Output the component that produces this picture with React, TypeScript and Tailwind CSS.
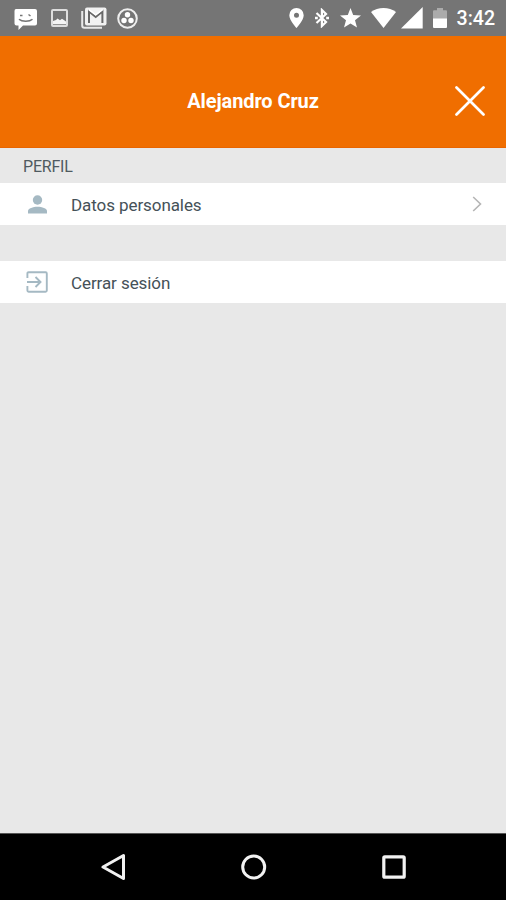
import React from 'react';

function StatusBar() {
    return (
        <div className="flex h-9 items-start bg-[#757575] text-white">
            {/* Notifications */}
            <svg className="ml-[14px] mt-[9px]" width="23" height="21" viewBox="0 0 23 21" fill="none">
                <path d="M2 0H21Q23 0 23 2V14.5Q23 16.5 21 16.5H9L4.5 21V16.5H2.5Q.5 16.5 .5 14.5V2Q.5 0 2 0Z" fill="currentColor" />
                <path d="M6 6.5H8.5M14.5 5.5L16.5 7M5 10.3C8 13 15.5 13 18.5 10.3" stroke="#757575" strokeWidth="1.5" />
            </svg>
            <svg className="ml-[14px] mt-[9px]" width="17" height="18" viewBox="0 0 17 18" fill="none">
                <rect x="1" y="1" width="15" height="16" rx="1" stroke="#dedede" strokeWidth="2" />
                <path d="M2 15.3V12L5 11L6.5 9.5L9 11.3L11 9.8L15 12.5V15.3Z" fill="#f5f5f5" />
            </svg>
            <svg className="ml-[13px] mt-[7px]" width="26" height="22" viewBox="0 0 26 22" fill="none">
                <path d="M1.2 4V18.5Q1.2 20.7 3.4 20.7H21" stroke="#e9e9e9" strokeWidth="2" />
                <rect x="4" y="0.5" width="21.5" height="18" rx="2" fill="#f2f2f2" />
                <path d="M8 16V4.5L14.7 10L21.4 4.5V16" stroke="#686868" strokeWidth="2" />
                <path d="M7.8 2.6L14.7 7.8L21.6 2.6" stroke="white" strokeWidth="1.4" />
            </svg>
            <svg className="ml-[10px] mt-[8px]" width="21" height="21" viewBox="0 0 21 21" fill="none">
                <circle cx="10.5" cy="10.5" r="9.3" stroke="#eeeeee" strokeWidth="2" />
                <circle cx="10.5" cy="6.8" r="2.7" fill="white" />
                <circle cx="7" cy="12.5" r="2.7" fill="white" />
                <circle cx="14" cy="12.5" r="2.7" fill="white" />
            </svg>

            {/* System */}
            <svg className="ml-[151px] mt-[8px]" width="15" height="20" viewBox="0 0 15 20">
                <path fillRule="evenodd" d="M7.5 0A7.2 7.2 0 0 0 .3 7.2C.3 12.3 7.5 20 7.5 20S14.7 12.3 14.7 7.2A7.2 7.2 0 0 0 7.5 0ZM7.5 4.7A2.5 2.5 0 1 1 7.5 9.7A2.5 2.5 0 1 1 7.5 4.7Z" fill="currentColor" />
            </svg>
            <svg className="ml-[11px] mt-[8px]" width="14" height="20" viewBox="0 0 14 20" fill="none">
                <path d="M1.5 5L11 14L6.9 18V2L11 6L1.5 15" stroke="currentColor" strokeWidth="2.2" />
                <path d="M0 8.7H2.8V11.3H0ZM11.2 8.7H14V11.3H11.2Z" fill="currentColor" />
            </svg>
            <svg className="ml-[11px] mt-[8px]" width="21" height="20" viewBox="0 0 21 20">
                <path d="M10.5 0L13.2 7L21 7.4L15 12.2L17 19.6L10.5 15.5L4 19.6L6 12.2L0 7.4L7.8 7Z" fill="currentColor" />
            </svg>
            <svg className="ml-[10px] mt-[8px]" width="25" height="20" viewBox="0 0 25 20">
                <path d="M0 4C7-1.2 18-1.2 25 4L12.5 20Z" fill="currentColor" />
            </svg>
            <svg className="ml-[5px] mt-[7px]" width="22" height="22" viewBox="0 0 22 22">
                <path d="M0 21.5L21.7 0V21.5Z" fill="currentColor" />
            </svg>
            <svg className="ml-[10px] mt-[8px]" width="14" height="20" viewBox="0 0 14 20">
                <path d="M1 2.2H4V0H10V2.2H13Q14 2.2 14 3.2V11H0V3.2Q0 2.2 1 2.2Z" fill="#ababab" />
                <path d="M0 10.5H14V19Q14 20 13 20H1Q0 20 0 19Z" fill="white" />
            </svg>
            <span className="ml-[9.5px] mt-[8px] text-[19.6px] font-medium leading-[22px]">3:42</span>
        </div>
    );
}

function Header() {
    return (
        <header className="grid h-28 grid-cols-[1fr_auto_1fr] items-center border-b border-[#e96500] bg-[#f06e00] pt-[18px] text-white">
            <span />
            <h1 className="text-[20px] font-bold leading-6 tracking-[-0.1px]">Alejandro Cruz</h1>
            <svg className="mr-[21px] justify-self-end" width="30" height="30" viewBox="0 0 30 30" fill="none">
                <path d="M1.5 1.5L28.5 28.5M28.5 1.5L1.5 28.5" stroke="currentColor" strokeWidth="2.7" strokeLinecap="round" />
            </svg>
        </header>
    );
}

function Row({ icon, label, arrow }: { icon: React.ReactNode; label: string; arrow?: boolean }) {
    return (
        <div className="flex h-[42px] items-center bg-white pl-[26px] pr-[24px]">
            <div className="w-[45px]">{icon}</div>
            <span className="flex-1 pt-px text-[17px] leading-5 tracking-[-0.08px] text-[#455158]">{label}</span>
            {arrow && (
                <svg width="10" height="16" viewBox="0 0 10 16" fill="none">
                    <path d="M1.2 1L8.5 8L1.2 15" stroke="#b5b5b5" strokeWidth="1.6" />
                </svg>
            )}
        </div>
    );
}

function NavBar() {
    return (
        <nav className="flex h-[67px] items-center border-t border-[#555555] bg-black pl-[101px]">
            <svg width="25" height="28" viewBox="0 0 25 28" fill="none">
                <path d="M2 14L22.5 2.5V25.5Z" stroke="#f2f2f2" strokeWidth="3" strokeLinejoin="round" />
            </svg>
            <svg className="ml-[115px]" width="26" height="26" viewBox="0 0 26 26" fill="none">
                <circle cx="12.7" cy="13" r="11" stroke="#f2f2f2" strokeWidth="3" />
            </svg>
            <svg className="ml-[115px]" width="24" height="24" viewBox="0 0 24 24" fill="none">
                <rect x="1.8" y="1.8" width="20.4" height="20.4" rx="1" stroke="#f2f2f2" strokeWidth="3.2" />
            </svg>
        </nav>
    );
}

function App() {
    return (
        <div className="flex h-[900px] w-[506px] flex-col overflow-hidden bg-[#e8e8e8] font-['Roboto',sans-serif]">
            <StatusBar />
            <Header />
            <main className="flex-1">
                <h2 className="flex h-[35px] items-center pl-[23px] pt-[3px] text-[16px] leading-5 tracking-[-0.2px] text-[#4f5a60]">PERFIL</h2>
                <Row
                    label="Datos personales"
                    arrow
                    icon={
                        <svg className="ml-[2px]" width="19" height="19" viewBox="0 0 19 19" fill="#a5b9c3">
                            <circle cx="9.5" cy="5" r="4.7" />
                            <path d="M0 18.5V16C0 13.3 5 11.7 9.5 11.7S19 13.3 19 16V18.5Z" />
                        </svg>
                    }
                />
                <div className="h-9" />
                <Row
                    label="Cerrar sesión"
                    icon={
                        <svg width="22" height="22" viewBox="0 0 22 22" fill="none" stroke="#a5b9c3" strokeWidth="1.9">
                            <path d="M1.4 7V2.4Q1.4 1.2 2.6 1.2H19.6Q20.8 1.2 20.8 2.4V19.6Q20.8 20.8 19.6 20.8H2.6Q1.4 20.8 1.4 19.6V15" />
                            <path d="M1 11H14.5M9.5 6L14.5 11L9.5 16" />
                        </svg>
                    }
                />
            </main>
            <NavBar />
        </div>
    );
}

export default App;
